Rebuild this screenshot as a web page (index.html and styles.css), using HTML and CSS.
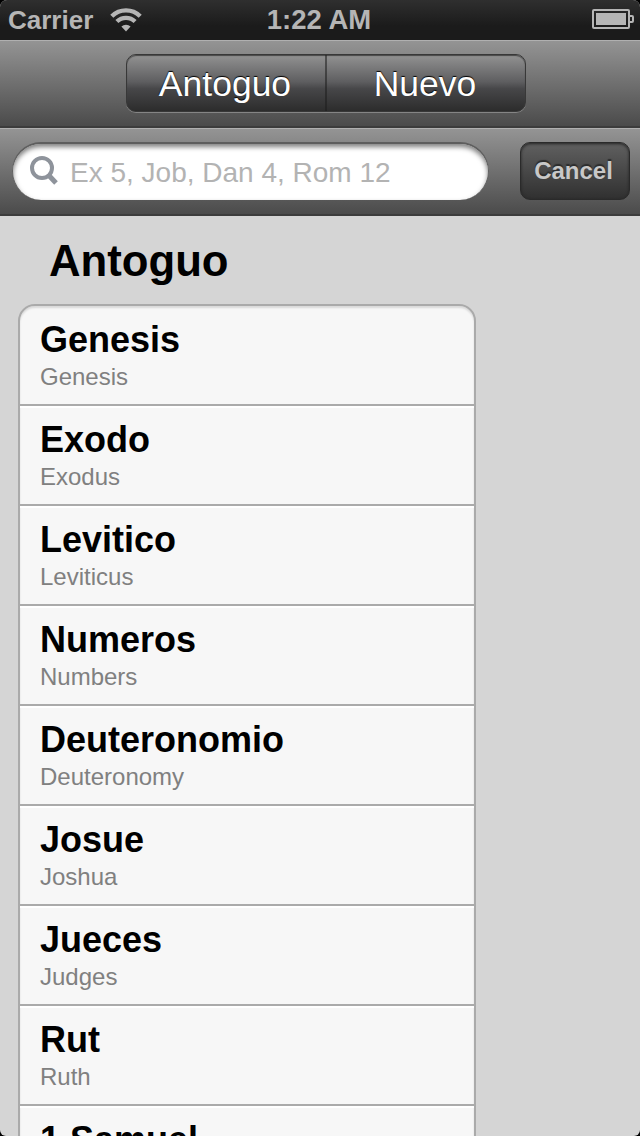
FILE: index.html
```html
<!DOCTYPE html>
<html lang="es">
<head>
  <meta charset="utf-8">
  <meta name="viewport" content="width=device-width, initial-scale=1">
  <title>Antoguo</title>
  <link rel="stylesheet" href="styles.css">
</head>
<body>
  <div class="screen">
    <div class="status-bar">
      <div class="carrier">
        <span>Carrier</span>
        <svg width="32" height="24" viewBox="0 0 32 24" fill="none" stroke="#b5b5b5">
          <path d="M1.8 8.2a20.2 20.2 0 0 1 28.4 0" stroke-width="4.4"/>
          <path d="M6.9 13.6a12.8 12.8 0 0 1 18.2 0" stroke-width="4.2"/>
          <path d="M16 23.4l-4.6-4.8a6.4 6.4 0 0 1 9.2 0z" fill="#b5b5b5" stroke="none"/>
        </svg>
      </div>
      <div class="time">1:22 AM</div>
      <svg class="battery" width="42" height="20" viewBox="0 0 42 20" fill="none" stroke="#b5b5b5" stroke-width="2">
        <rect x="1" y="1" width="36" height="18" rx="1"/>
        <path d="M38 7h2q1 0 1 1v4q0 1-1 1h-2"/>
        <rect x="4" y="4" width="30" height="12" fill="#b5b5b5" stroke="none"/>
      </svg>
    </div>

    <div class="toolbar nav-bar">
      <div class="segmented">
        <button class="segment">Antoguo</button>
        <button class="segment">Nuevo</button>
      </div>
    </div>

    <div class="toolbar search-bar">
      <div class="search-field">
        <svg width="30" height="32" viewBox="0 0 30 32" fill="none" stroke="#8e939b">
          <circle cx="13" cy="12" r="10" stroke-width="4"/>
          <path d="M19 18.5l8 8.5" stroke-width="5"/>
        </svg>
        <span>Ex 5, Job, Dan 4, Rom 12</span>
      </div>
      <button class="cancel">Cancel</button>
    </div>

    <h1>Antoguo</h1>
    <ul class="books">
      <li><strong>Genesis</strong><span>Genesis</span></li>
      <li><strong>Exodo</strong><span>Exodus</span></li>
      <li><strong>Levitico</strong><span>Leviticus</span></li>
      <li><strong>Numeros</strong><span>Numbers</span></li>
      <li><strong>Deuteronomio</strong><span>Deuteronomy</span></li>
      <li><strong>Josue</strong><span>Joshua</span></li>
      <li><strong>Jueces</strong><span>Judges</span></li>
      <li><strong>Rut</strong><span>Ruth</span></li>
      <li><strong>1 Samuel</strong></li>
    </ul>
  </div>
</body>
</html>
```
FILE: styles.css
```css
* {
  box-sizing: border-box;
}
body {
  margin: 0;
  background-color: #000;
  font-family: "Liberation Sans", Arial, sans-serif;
}
.screen {
  height: 1136px;
  overflow: hidden;
  background-color: #d5d5d5;
  border-radius: 7px 7px 6px 6px;
}

/* Status bar */
.status-bar {
  display: grid;
  grid-template-columns: 1fr auto 1fr;
  align-items: center;
  height: 40px;
  padding: 0 6px 1px 8px;
  background: linear-gradient(#2f2f2f, #1b1b1b 65%, #1b1b1b);
  color: #b5b5b5;
  font-size: 26px;
  font-weight: bold;
}
.carrier {
  display: flex;
  align-items: center;
  gap: 17px;
}
.carrier span {
  padding-top: 1px;
}
.time {
  padding: 1px 4px 0 0;
  font-size: 27.5px;
}
.battery {
  justify-self: end;
  margin-bottom: 1px;
}

/* Toolbars */
.toolbar {
  display: flex;
  height: 88px;
  padding-top: 13px;
  border-top: 1px solid #b0b0b0;
  border-bottom: 2px solid #3c3c3c;
  background: linear-gradient(#949494, #4b4b4b);
}
.nav-bar {
  justify-content: center;
  padding-left: 12px;
}
button {
  padding: 0;
  border: none;
  font-family: inherit;
}
.segmented {
  display: flex;
  width: 400px;
  height: 58px;
  border: 1px solid #383838;
  border-radius: 10px;
  background: linear-gradient(#929292, #5e5e60 48%, #474749 60%, #2c2c2c);
  box-shadow: inset 0 1px 1px #484848, 0 1px 0 #858585;
}
.segment {
  flex: 1;
  padding: 2px 2px 0 0;
  background: none;
  color: #fff;
  font-size: 35.5px;
  text-shadow: 0 -1px 1px #000;
}
.segment + .segment {
  border-left: 2px solid rgba(30, 30, 30, 0.55);
}
.search-bar {
  justify-content: space-between;
  padding-left: 12px;
  padding-right: 10px;
}
.search-field {
  display: flex;
  align-items: center;
  gap: 11px;
  width: 477px;
  height: 58px;
  padding-left: 16px;
  border: 2px solid #5e5e5e;
  border-width: 2px 1px 0;
  border-radius: 29px;
  background-color: #fff;
  box-shadow: inset 0 3px 5px rgba(0, 0, 0, 0.5);
  color: #b3b3b3;
  font-size: 28px;
  white-space: nowrap;
}
.search-field span {
  padding-top: 2px;
}
.cancel {
  width: 110px;
  height: 58px;
  padding-right: 3px;
  border: 1px solid #2a2a2a;
  border-radius: 10px;
  background: linear-gradient(#606060, #303030);
  box-shadow: inset 0 1px 3px #222;
  color: #c8c8c8;
  font-size: 24px;
  font-weight: bold;
  text-shadow: 0 -2px 1px #2c2c2c;
}

/* Book list */
h1 {
  margin: 20px 0 18px 49px;
  font-size: 43.7px;
  line-height: 50px;
}
.books {
  width: 458px;
  margin: 0 0 0 18px;
  padding: 0;
  border: 2px solid #aaa;
  border-radius: 17px 17px 0 0;
  background-color: #f7f7f7;
  box-shadow: inset 0 2px 2px rgba(0, 0, 0, 0.12);
  list-style: none;
}
.books li {
  height: 100px;
  padding: 14px 20px 0;
  border-bottom: 2px solid #aaa;
}
.books li + li {
  box-shadow: inset 0 2px 0 #fff;
}
.books strong,
.books span {
  display: block;
}
.books strong {
  font-size: 36px;
  line-height: 40px;
}
.books span {
  margin-top: 3px;
  color: #808080;
  font-size: 24px;
  line-height: 28px;
}
```
